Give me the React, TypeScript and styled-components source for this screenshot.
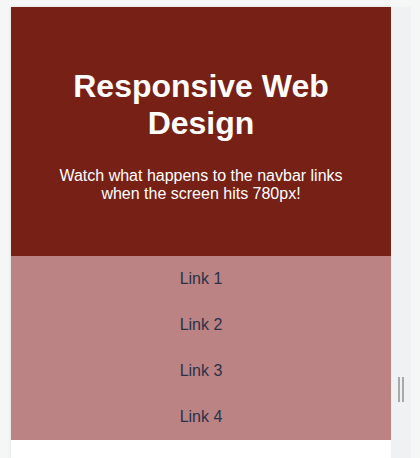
import React from "react";
import styled, { createGlobalStyle } from "styled-components";

const Global = createGlobalStyle`
  html, body { margin: 0; padding: 0; background: #f5f6f6; }
  body { font-family: "Liberation Sans", Arial, sans-serif; overflow: hidden; }
`;

const Stage = styled.div`
  display: flex;
  padding: 7px 0 0 11px;
  height: 451px;
`;

const Frame = styled.div`
  width: 380px;
  background: #ffffff;
  box-shadow: 0 0 3px rgba(0, 0, 0, 0.12);
  display: flex;
  flex-direction: column;
`;

const Header = styled.header`
  background: #772015;
  color: #ffffff;
  height: 249px;
  box-sizing: border-box;
  padding: 61px 20px 0;
  text-align: center;
`;

const Title = styled.h1`
  margin: 0;
  font-size: 32px;
  font-weight: 700;
  line-height: 37px;
`;

const Subtitle = styled.p`
  margin: 25px auto 0;
  font-size: 16px;
  line-height: 18px;
  max-width: 300px;
`;

const Nav = styled.nav`
  background: #bb8383;
  display: flex;
  flex-direction: column;
`;

const NavLink = styled.a`
  display: block;
  height: 46px;
  line-height: 46px;
  text-align: center;
  font-size: 16px;
  color: #2a3149;
  text-decoration: none;
`;

const Rail = styled.div`
  width: 20px;
  background: #f0f1f3;
  display: flex;
  justify-content: center;
  gap: 2px;
  padding-top: 370px;
  box-sizing: border-box;
`;

const Grip = styled.span`
  width: 2px;
  height: 25px;
  background: #a8aaaa;
`;

export default function App() {
  return (
    <>
      <Global />
      <Stage>
        <Frame>
          <Header>
            <Title>Responsive Web Design</Title>
            <Subtitle>Watch what happens to the navbar links when the screen hits 780px!</Subtitle>
          </Header>
          <Nav>
            {["Link 1", "Link 2", "Link 3", "Link 4"].map((l) => (
              <NavLink key={l} href="#">{l}</NavLink>
            ))}
          </Nav>
        </Frame>
        <Rail>
          <Grip />
          <Grip />
        </Rail>
      </Stage>
    </>
  );
}
